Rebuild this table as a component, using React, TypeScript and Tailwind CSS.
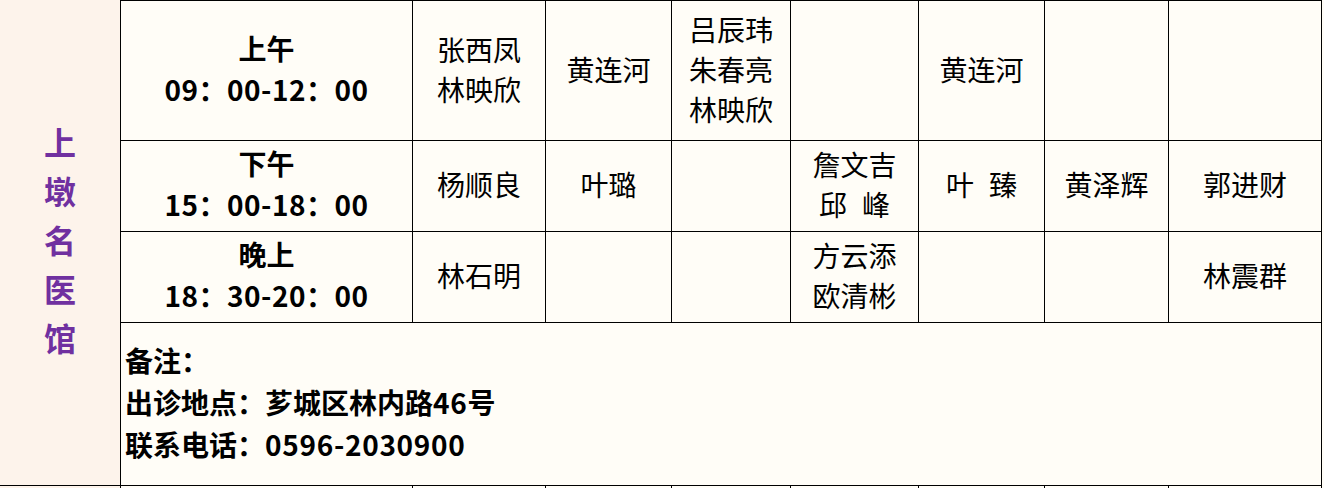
import React from "react";

const font = { fontFamily: '"Noto Sans CJK SC", "Noto Sans", sans-serif' };

function Gap() {
  return <span className="inline-block w-[15px]" />;
}

function Names({ lines }: { lines: React.ReactNode[] }) {
  return (
    <div className="flex flex-col items-center justify-center text-[28px] leading-[40px] text-black">
      {lines.map((l, i) => (
        <div key={i} className="whitespace-nowrap">
          {l}
        </div>
      ))}
    </div>
  );
}

function Cell({
  children,
  top,
  className = "",
}: {
  children?: React.ReactNode;
  top?: boolean;
  className?: string;
}) {
  return (
    <div
      className={`border-r border-b border-black flex items-center justify-center pb-[4px] ${
        top ? "border-t" : ""
      } ${className}`}
    >
      {children}
    </div>
  );
}

function TimeCell({ label, time, top }: { label: string; time: string; top?: boolean }) {
  return (
    <Cell top={top}>
      <div className="flex flex-col items-center font-bold text-[28px] leading-[41px] text-black">
        <div>{label}</div>
        <div className="whitespace-nowrap tracking-[0.5px]">{time}</div>
      </div>
    </Cell>
  );
}

export default function App() {
  const rows: { label: string; time: string; cells: React.ReactNode[][] }[] = [
    {
      label: "上午",
      time: "09：00-12：00",
      cells: [
        ["张西凤", "林映欣"],
        ["黄连河"],
        ["吕辰玮", "朱春亮", "林映欣"],
        [],
        ["黄连河"],
        [],
        [],
      ],
    },
    {
      label: "下午",
      time: "15：00-18：00",
      cells: [
        ["杨顺良"],
        ["叶璐"],
        [],
        ["詹文吉", <>邱<Gap />峰</>],
        [<>叶<Gap />臻</>],
        ["黄泽辉"],
        ["郭进财"],
      ],
    },
    {
      label: "晚上",
      time: "18：30-20：00",
      cells: [
        ["林石明"],
        [],
        [],
        ["方云添", "欧清彬"],
        [],
        [],
        ["林震群"],
      ],
    },
  ];

  return (
    <div className="w-[1324px] h-[488px] overflow-hidden bg-[#fffdf7]" style={font}>
      <div className="grid w-[1322px] grid-cols-[121px_292px_133px_126px_119px_128px_126px_124px_153px] grid-rows-[141px_91px_91px_163px_40px] bg-[#fffdf7]">
        <div className="row-span-4 border-r border-b border-black bg-[#fdf3eb] flex flex-col items-center justify-center pb-[6px] text-[32px] leading-[49px] font-bold text-[#7030a0]">
          <div>上</div>
          <div>墩</div>
          <div>名</div>
          <div>医</div>
          <div>馆</div>
        </div>
        {rows.map((r, ri) => (
          <React.Fragment key={ri}>
            <TimeCell label={r.label} time={r.time} top={ri === 0} />
            {r.cells.map((c, ci) => (
              <Cell key={ci} top={ri === 0}>
                {c.length > 0 && <Names lines={c} />}
              </Cell>
            ))}
          </React.Fragment>
        ))}
        <div className="col-span-8 border-r border-b border-black flex flex-col justify-center pl-[4px] pb-[4px] font-bold text-[28px] leading-[42px] text-black">
          <div>备注：</div>
          <div>
            出诊地点：芗城区林内路<span className="tracking-[0.7px]">46</span>号
          </div>
          <div>
            联系电话：<span className="tracking-[0.7px]">0596-2030900</span>
          </div>
        </div>
        <div className="border-r border-black bg-[#fdf3eb]" />
        <div className="border-r border-black" />
        <div className="border-r border-black" />
        <div className="border-r border-black" />
        <div className="border-r border-black" />
        <div className="border-r border-black" />
        <div className="border-r border-black" />
        <div className="border-r border-black" />
        <div className="border-r border-black" />
      </div>
    </div>
  );
}
